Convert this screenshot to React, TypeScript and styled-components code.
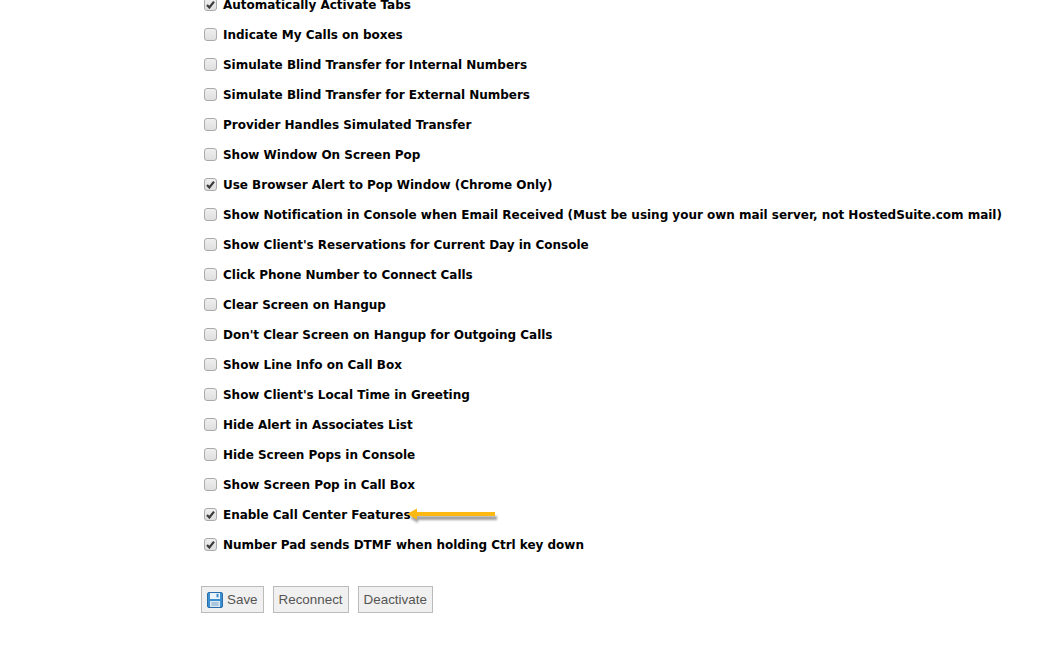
import React from 'react';
import styled, { createGlobalStyle } from 'styled-components';

const Global = createGlobalStyle`
  html, body { margin: 0; padding: 0; background: #fff; overflow: hidden; }
  body { width: 1051px; height: 654px; }
`;

const Page = styled.div`
  display: flex;
  flex-direction: column;
  padding: 0 0 0 204px;
  margin-top: -11px;
  height: 665px;
  overflow: hidden;
`;

const List = styled.div`
  display: flex;
  flex-direction: column;
`;

const Row = styled.label`
  position: relative;
  display: flex;
  align-items: center;
  height: 30px;
  gap: 6px;
  font: bold 12px "DejaVu Sans", Verdana, sans-serif;
  letter-spacing: -0.02px;
  color: #000;
  white-space: nowrap;
`;

const Caption = styled.span`
  padding-top: 2px;
`;

const Box = styled.span<{ $on?: boolean }>`
  width: 13px;
  height: 13px;
  box-sizing: border-box;
  border: 1px solid #ababab;
  border-radius: 3px;
  background: linear-gradient(#efefef, #dedede);
  display: flex;
  align-items: center;
  justify-content: center;
  flex: none;
`;

const Arrow = styled.svg`
  position: absolute;
  left: 198px;
  top: 4px;
`;

const Actions = styled.div`
  display: flex;
  gap: 9px;
  margin: 27px 0 0 -3px;
`;

const Btn = styled.button`
  height: 27px;
  box-sizing: border-box;
  display: flex;
  align-items: center;
  gap: 4px;
  padding: 0 5px;
  border: 1px solid #bbb;
  background: #f0f0f0;
  font: 13.4px "Liberation Sans", Arial, sans-serif;
  color: #555;
`;

const Check = () => (
  <svg width="9" height="9" viewBox="0 0 9 9">
    <path d="M1 5 L3.4 7.5 L8 1.6" fill="none" stroke="#3c3c3c" strokeWidth="2.2" />
  </svg>
);

const SaveIcon = () => (
  <svg width="16" height="16" viewBox="0 0 16 16">
    <rect x="0.5" y="0.5" width="15" height="15" rx="1.5" fill="#3d8fd0" stroke="#2a6da8" />
    <rect x="3" y="1" width="10" height="6" fill="#eaf3fa" />
    <rect x="9.5" y="1.8" width="2" height="3.5" fill="#3d8fd0" />
    <rect x="3" y="9" width="10" height="6" fill="#d8e6f1" />
    <path d="M4.5 11h7M4.5 13h7" stroke="#7fa6c6" />
  </svg>
);

const items: [string, boolean][] = [
  ['Automatically Activate Tabs', true],
  ['Indicate My Calls on boxes', false],
  ['Simulate Blind Transfer for Internal Numbers', false],
  ['Simulate Blind Transfer for External Numbers', false],
  ['Provider Handles Simulated Transfer', false],
  ['Show Window On Screen Pop', false],
  ['Use Browser Alert to Pop Window (Chrome Only)', true],
  ['Show Notification in Console when Email Received (Must be using your own mail server, not HostedSuite.com mail)', false],
  ["Show Client's Reservations for Current Day in Console", false],
  ['Click Phone Number to Connect Calls', false],
  ['Clear Screen on Hangup', false],
  ["Don't Clear Screen on Hangup for Outgoing Calls", false],
  ['Show Line Info on Call Box', false],
  ["Show Client's Local Time in Greeting", false],
  ['Hide Alert in Associates List', false],
  ['Hide Screen Pops in Console', false],
  ['Show Screen Pop in Call Box', false],
  ['Enable Call Center Features', true],
  ['Number Pad sends DTMF when holding Ctrl key down', true],
];

export default function App() {
  return (
    <>
      <Global />
      <Page>
        <List>
          {items.map(([t, on]) => (
            <Row key={t}>
              <Box $on={on}>{on && <Check />}</Box>
              <Caption>{t}</Caption>
              {t.startsWith('Enable') && (
                <Arrow width="104" height="26" viewBox="0 0 104 26">
                  <defs>
                    <filter id="s" x="-20%" y="-100%" width="140%" height="300%">
                      <feGaussianBlur stdDeviation="1.2" />
                    </filter>
                  </defs>
                  <path d="M8 15 L16 10 V13 H95 V17 H16 V20 Z" fill="#888" filter="url(#s)" opacity="0.8" />
                  <path d="M5 11 L15 5.5 V9 H93 V13 H15 V16.5 Z" fill="#fdb813" />
                </Arrow>
              )}
            </Row>
          ))}
        </List>
        <Actions>
          <Btn><SaveIcon />Save</Btn>
          <Btn>Reconnect</Btn>
          <Btn>Deactivate</Btn>
        </Actions>
      </Page>
    </>
  );
}
